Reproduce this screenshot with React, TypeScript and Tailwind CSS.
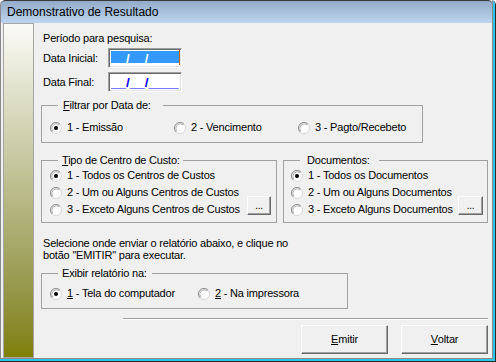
import React from "react";

function Radio({ checked }: { checked?: boolean }) {
  return (
    <svg width="12" height="12" viewBox="0 0 12 12" className="shrink-0">
      <circle cx="6" cy="6" r="5.5" fill="#fff" stroke="#d6d6d6" />
      <path d="M2.1 9.9A5.5 5.5 0 0 1 9.9 2.1" fill="none" stroke="#8c8c8c" />
      <path d="M2.9 9.1A4.4 4.4 0 0 1 9.1 2.9" fill="none" stroke="#b4b4b4" />
      {checked && <circle cx="6" cy="6" r="2" fill="#000" />}
    </svg>
  );
}

function Option({
  checked,
  children,
  className = "",
}: {
  checked?: boolean;
  children: React.ReactNode;
  className?: string;
}) {
  return (
    <div className={`flex items-center gap-[5px] h-[13px] ${className}`}>
      <Radio checked={checked} />
      <span className="whitespace-nowrap">{children}</span>
    </div>
  );
}

function DotsButton({ className = "" }: { className?: string }) {
  return (
    <div
      className={`h-[19px] flex items-end justify-center pb-[3px] text-[10px] leading-none bg-[#f0f0f0] border border-t-white border-l-white border-r-[#696969] border-b-[#696969] shadow-[inset_-1px_-1px_0_#a0a0a0] ${className}`}
    >
      ...
    </div>
  );
}

function DateInput({ selected }: { selected?: boolean }) {
  return (
    <div className="w-[74px] h-[20px] bg-white border border-t-[#a0a0a0] border-l-[#a0a0a0] border-b-white border-r-white shadow-[inset_1px_1px_0_#696969,inset_-1px_-1px_0_#e3e3e3] flex items-start pt-[2px] pl-[2px]">
      {selected ? (
        <>
          <span className="inline-block h-[12px] bg-[#3399ff] text-white font-bold text-[13.5px] leading-[15px] tracking-normal">
            __/__/____
          </span>
          <span className="w-[1px] h-[15px] -mt-[1px] bg-[#c86400]" />
        </>
      ) : (
        <span className="inline-block text-[#0000ff] font-bold text-[13.5px] leading-[15px] tracking-normal">
          __/__/____
        </span>
      )}
    </div>
  );
}

function WinButton({ children }: { children: React.ReactNode }) {
  return (
    <div className="w-[87px] h-[29px] flex items-center justify-center bg-[#f0f0f0] border border-t-white border-l-white border-r-[#696969] border-b-[#696969] shadow-[inset_-1px_-1px_0_#a0a0a0]">
      {children}
    </div>
  );
}

export default function App() {
  return (
    <div className="w-[496px] h-[362px] border-r border-b border-[#2a2a2a] rounded-t-[5px] overflow-hidden font-['Liberation_Sans',Arial,sans-serif] text-[11px] leading-[13px] tracking-[-0.2px] text-black">
      <div className="h-full flex flex-col border-r-2 border-b-2 border-[#2dc4ea]">
        <div className="flex-1 flex flex-col bg-[#f0f0f0] border-l border-r border-b border-[#8a8a8a]">
          {/* title bar */}
          <div className="h-[23px] shrink-0 flex items-center pl-[6px] border-t border-[#3a3a3a] rounded-t-[4px] bg-gradient-to-b from-[#93abca] to-[#bdd5ee] text-[12px] tracking-normal">
            Demonstrativo de Resultado
          </div>

          <div className="flex-1 flex pl-[2px]">
            {/* side strip */}
            <div className="w-[31px] border border-[#a5a5a5] bg-gradient-to-b from-[#fbfbf7] to-[#7f7f00]" />

            <div className="flex-1 flex flex-col pl-[7px] pr-[4px] pt-[9px]">
              <div className="ml-[2px]">Período para pesquisa:</div>

              <div className="mt-[3px] flex items-center">
                <span className="ml-[2px] w-[65px]">Data Inicial:</span>
                <DateInput selected />
              </div>
              <div className="mt-[4px] flex items-center">
                <span className="ml-[2px] w-[65px]">Data Final:</span>
                <DateInput />
              </div>

              <fieldset className="mt-[7px] w-[382px] border border-[#a0a0a0] pt-[9px] pb-[8px] pl-[8px]">
                <legend className="ml-[8px] pl-[5px] pr-[12px]">
                  <span className="underline">F</span>iltrar por Data de:
                </legend>
                <div className="flex">
                  <Option checked className="w-[124px]">1 - Emissão</Option>
                  <Option className="w-[124px]">2 - Vencimento</Option>
                  <Option>3 - Pagto/Recebeto</Option>
                </div>
              </fieldset>

              <div className="mt-[11px] flex gap-[6px]">
                <fieldset className="w-[236px] border border-[#a0a0a0] pb-[4px] pl-[8px] pr-[5px]">
                  <legend className="ml-[8px] pl-[4px] pr-[3px]">
                    <span className="underline">T</span>ipo de Centro de Custo:
                  </legend>
                  <div className="h-[17px] flex items-center">
                    <Option checked>1 - Todos os Centros de Custos</Option>
                  </div>
                  <div className="h-[17px] flex items-center">
                    <Option>2 - Um ou Alguns Centros de Custos</Option>
                  </div>
                  <div className="h-[17px] flex items-center justify-between">
                    <Option>3 - Exceto Alguns Centros de Custos</Option>
                    <DotsButton className="w-[24px] self-start -mt-[5px]" />
                  </div>
                </fieldset>

                <fieldset className="w-[205px] border border-[#a0a0a0] pb-[4px] pl-[7px] pr-[4px]">
                  <legend className="ml-[9px] pl-[7px] pr-[9px]">Documentos:</legend>
                  <div className="h-[17px] flex items-center">
                    <Option checked>1 - Todos os Documentos</Option>
                  </div>
                  <div className="h-[17px] flex items-center">
                    <Option>2 - Um ou Alguns Documentos</Option>
                  </div>
                  <div className="h-[17px] flex items-center justify-between">
                    <Option>3 - Exceto Alguns Documentos</Option>
                    <DotsButton className="w-[25px] self-start -mt-[5px]" />
                  </div>
                </fieldset>
              </div>

              <p className="mt-[14px] ml-[2px] leading-[12px]">
                Selecione onde enviar o relatório abaixo, e clique no
                <br />
                botão "EMITIR" para executar.
              </p>

              <fieldset className="mt-[6px] w-[307px] border border-[#a0a0a0] pt-[7px] pb-[8px] pl-[8px]">
                <legend className="ml-[8px] pl-[4px] pr-[5px]">Exibir relatório na:</legend>
                <div className="flex">
                  <Option checked className="w-[148px]">
                    <span className="underline">1</span> - Tela do computador
                  </Option>
                  <Option>
                    <span className="underline">2</span> - Na impressora
                  </Option>
                </div>
              </fieldset>

              <div className="mt-[9px] ml-[82px] border-t border-b border-t-[#a0a0a0] border-b-white" />

              <div className="mt-[5px] flex justify-end gap-[13px]">
                <WinButton>
                  <span className="underline">E</span>mitir
                </WinButton>
                <WinButton>
                  <span className="underline">V</span>oltar
                </WinButton>
              </div>
            </div>
          </div>
        </div>
      </div>
    </div>
  );
}
